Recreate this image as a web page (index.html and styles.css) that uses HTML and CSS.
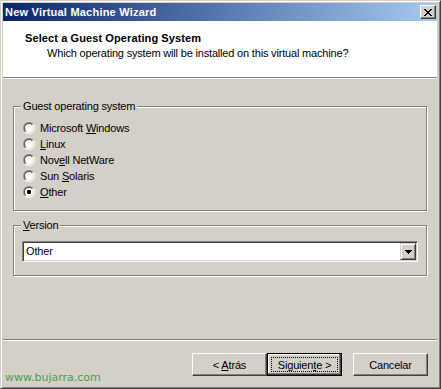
FILE: index.html
```html
<!DOCTYPE html>
<html>
<head>
<meta charset="utf-8">
<title>New Virtual Machine Wizard</title>
<link rel="stylesheet" href="styles.css">
</head>
<body>
<div class="window">
  <div class="titlebar">
    <span class="title">New Virtual Machine Wizard</span>
    <span class="close">
      <svg width="8" height="7" viewBox="0 0 8 7" shape-rendering="crispEdges">
        <path fill="#000" d="M0 0h2v1H0zM6 0h2v1H6zM1 1h2v1H1zM5 1h2v1H5zM2 2h4v1H2zM3 3h2v1H3zM2 4h4v1H2zM1 5h2v1H1zM5 5h2v1H5zM0 6h2v1H0zM6 6h2v1H6z"/>
      </svg>
    </span>
  </div>
  <div class="client">
    <div class="header">
      <div class="h-title">Select a Guest Operating System</div>
      <div class="h-sub">Which operating system will be installed on this virtual machine?</div>
    </div>
    <div class="main">
      <div class="group g1">
        <div class="legend">Guest operating system</div>
        <div class="radios">
          <div class="radio"><span class="rb"></span><span>Microsoft <u>W</u>indows</span></div>
          <div class="radio"><span class="rb"></span><span><u>L</u>inux</span></div>
          <div class="radio"><span class="rb"></span><span>Nov<u>e</u>ll NetWare</span></div>
          <div class="radio"><span class="rb"></span><span>Sun <u>S</u>olaris</span></div>
          <div class="radio"><span class="rb checked"></span><span><u>O</u>ther</span></div>
        </div>
      </div>
      <div class="group g2">
        <div class="legend"><u>V</u>ersion</div>
        <div class="combo">
          <span class="combo-text">Other</span>
          <span class="combo-btn">
            <svg width="7" height="4" viewBox="0 0 7 4" shape-rendering="crispEdges">
              <path fill="#000" d="M0 0h7v1H0zM1 1h5v1H1zM2 2h3v1H2zM3 3h1v1H3z"/>
            </svg>
          </span>
        </div>
      </div>
    </div>
    <div class="sep"></div>
    <div class="buttons">
      <div class="btn"><span class="focus"><span>&lt; <u>A</u>trás</span></span></div>
      <div class="btn default"><span class="focus on"><span>Siguien<u>t</u>e &gt;</span></span></div>
      <div class="btn cancel"><span class="focus"><span>Cancelar</span></span></div>
    </div>
  </div>
  <div class="watermark">www.bujarra.com</div>
</div>
</body>
</html>
```
FILE: styles.css
```css
html, body {
  margin: 0;
  padding: 0;
}
body {
  width: 441px;
  height: 389px;
  overflow: hidden;
  background: #d4d0c8;
  font-family: "Liberation Sans", Arial, sans-serif;
  font-size: 11px;
  letter-spacing: -0.18px;
  color: #000;
}
u {
  text-decoration: underline;
  text-underline-offset: 1px;
}
.window {
  position: relative;
  box-sizing: border-box;
  width: 441px;
  height: 389px;
  background: #d4d0c8;
  border: 1px solid;
  border-color: #d4d0c8 #404040 #404040 #d4d0c8;
  box-shadow: inset 1px 1px #fff, inset -1px -1px #808080;
  padding: 2px 3px 3px 2px;
  display: flex;
  flex-direction: column;
}
.titlebar {
  flex: none;
  height: 18px;
  display: flex;
  align-items: center;
  justify-content: space-between;
  padding: 0 1px 0 2px;
  background: linear-gradient(to right, #0a246a, #a6caf0);
}
.title {
  color: #fff;
  font-weight: bold;
  line-height: 13px;
  letter-spacing: 0.22px;
}
.close {
  box-sizing: border-box;
  width: 16px;
  height: 14px;
  display: flex;
  align-items: center;
  justify-content: center;
  background: #d4d0c8;
  border: 1px solid;
  border-color: #fff #404040 #404040 #fff;
  box-shadow: inset -1px -1px #808080;
}
.client {
  flex: 1;
  display: flex;
  flex-direction: column;
}
.header {
  flex: none;
  box-sizing: border-box;
  height: 57px;
  background: #fff;
  border-bottom: 1px solid #808080;
  padding: 11px 0 0 22px;
}
.h-title {
  font-weight: bold;
  line-height: 13px;
  letter-spacing: 0.1px;
}
.h-sub {
  line-height: 13px;
  margin-top: 2px;
  padding-left: 22px;
}
.main {
  flex: 1;
  border-top: 1px solid #fff;
  padding: 0 10px;
}
.group {
  border: 1px solid #808080;
  box-shadow: inset 1px 1px #fff, 1px 1px #fff;
}
.g1 {
  margin-top: 27px;
  padding-bottom: 10px;
}
.g2 {
  margin-top: 14px;
  padding: 0 8px 13px;
}
.legend {
  width: fit-content;
  margin: -7px 0 0 7px;
  padding: 0 2px;
  line-height: 13px;
  background: #d4d0c8;
}
.g2 .legend {
  margin-left: -1px;
}
.radios {
  padding: 7px 0 0 9px;
}
.radio {
  display: flex;
  align-items: center;
  height: 16px;
}
.rb {
  position: relative;
  box-sizing: border-box;
  flex: none;
  width: 12px;
  height: 12px;
  margin-right: 5px;
  border-radius: 50%;
  background: #fff;
  border: 1px solid;
  border-color: #808080 #fff #fff #808080;
}
.rb::before {
  content: "";
  position: absolute;
  inset: 0;
  border-radius: 50%;
  border: 1px solid;
  border-color: #404040 #d4d0c8 #d4d0c8 #404040;
}
.rb.checked::after {
  content: "";
  position: absolute;
  left: 3px;
  top: 3px;
  width: 4px;
  height: 4px;
  border-radius: 1px;
  background: #000;
}
.combo {
  box-sizing: border-box;
  height: 21px;
  margin-top: 9px;
  display: flex;
  padding: 1px;
  background: #fff;
  border: 1px solid;
  border-color: #808080 #fff #fff #808080;
  box-shadow: inset 1px 1px #404040, inset -1px -1px #d4d0c8;
}
.combo-text {
  flex: 1;
  line-height: 17px;
  padding-left: 2px;
}
.combo-btn {
  box-sizing: border-box;
  width: 16px;
  height: 17px;
  display: flex;
  align-items: center;
  justify-content: center;
  background: #d4d0c8;
  border: 1px solid;
  border-color: #d4d0c8 #404040 #404040 #d4d0c8;
  box-shadow: inset 1px 1px #fff, inset -1px -1px #808080;
}
.sep {
  flex: none;
  border-top: 1px solid #808080;
  border-bottom: 1px solid #fff;
}
.buttons {
  flex: none;
  box-sizing: border-box;
  height: 44px;
  display: flex;
  justify-content: flex-end;
  padding: 12px 9px 0 0;
}
.btn {
  box-sizing: border-box;
  width: 75px;
  height: 23px;
  display: flex;
  padding: 3px;
  background: #d4d0c8;
  border: 1px solid;
  border-color: #fff #404040 #404040 #fff;
  box-shadow: inset -1px -1px #808080;
}
.btn.default {
  border-color: #000;
  box-shadow: inset -1px -1px #404040, inset -2px -2px #808080, inset 1px 1px #fff;
}
.btn.cancel {
  margin-left: 11px;
}
.focus {
  flex: 1;
  display: flex;
  align-items: center;
  justify-content: center;
  border: 1px dotted transparent;
}
.focus.on {
  border-color: #000;
}
.watermark {
  position: absolute;
  left: 4px;
  top: 370px;
  color: #4f9a4f;
  font-family: "DejaVu Sans", Verdana, sans-serif;
  font-size: 11px;
  line-height: 13px;
  letter-spacing: 0;
}
```
